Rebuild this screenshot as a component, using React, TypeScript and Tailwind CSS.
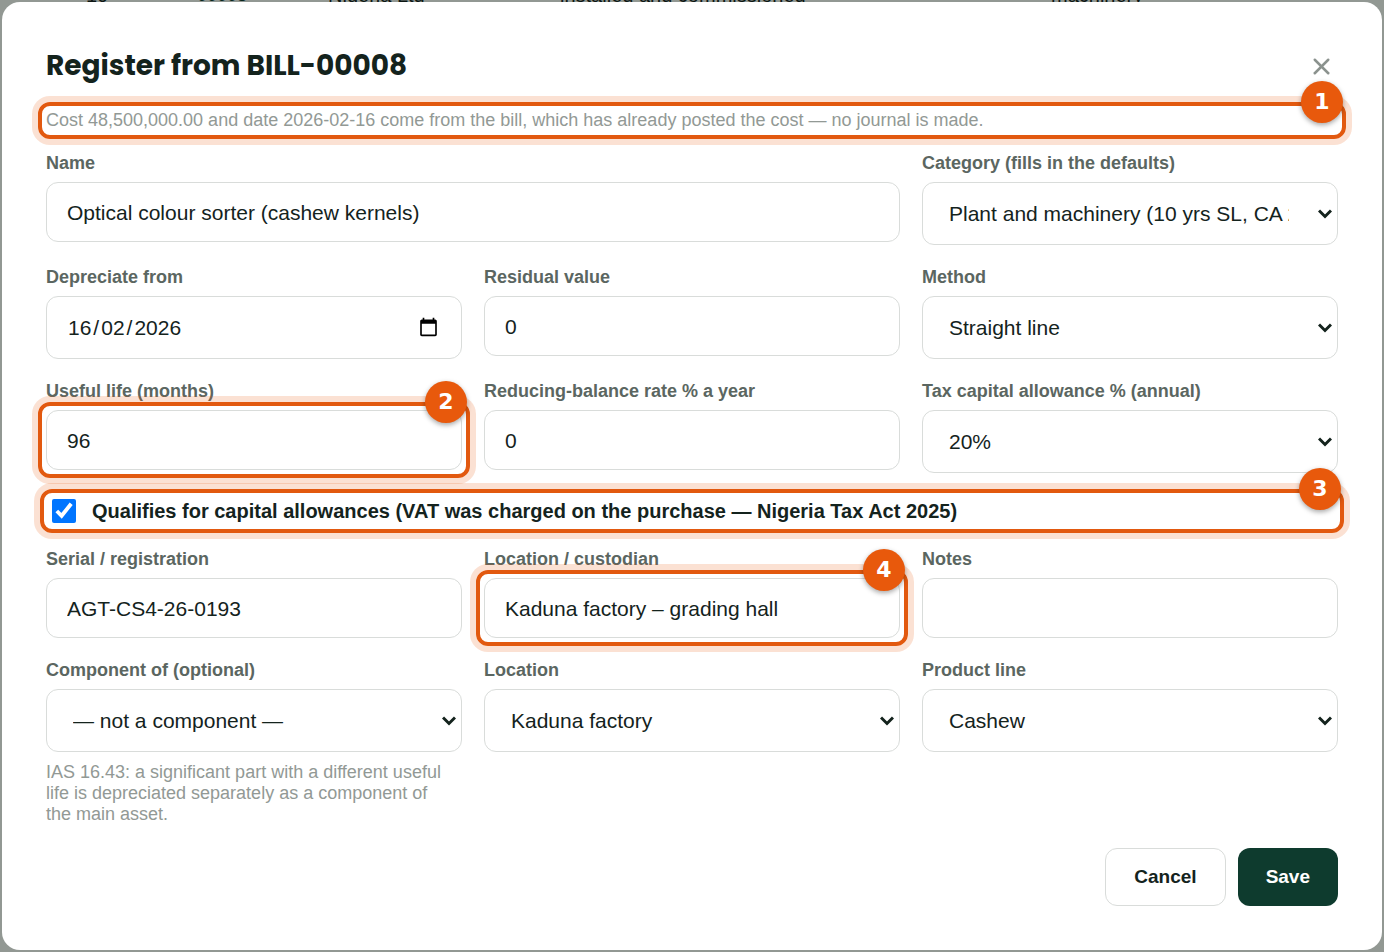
import { Fragment, useId, useState } from 'react';
import type { ReactNode } from 'react';
import { X } from 'lucide-react';

const control =
  'block w-full rounded-xl border border-[#d9dcda] bg-white text-[21px] text-[#14231d] outline-none';

// Numbered orange ring drawn over the parent; the parent must be relative.
function Callout({ n, tight = false }: { n: number; tight?: boolean }) {
  return (
    <span
      className={`pointer-events-none absolute z-10 rounded-xl border-4 border-[#e2590f] shadow-[0_0_0_6px_rgba(232,89,12,0.18)] ${
        tight ? '-inset-1.5' : '-inset-2'
      }`}
    >
      <span className="absolute -top-[25px] -right-px flex size-[42px] items-center justify-center rounded-full bg-[#e8590c] font-['DejaVu_Sans',sans-serif] text-[22px] leading-none font-bold text-white shadow-[0_2px_5px_rgba(0,0,0,0.35)]">
        {n}
      </span>
    </span>
  );
}

function Field({ id, label, hint, className = '', children }: {
  id: string;
  label: string;
  hint?: string;
  className?: string;
  children: ReactNode;
}) {
  return (
    <div className={className}>
      <label htmlFor={id} className="mb-2 block text-[18px] leading-[21px] font-bold text-[#5b6661]">
        {label}
      </label>
      {children}
      {hint && <p className="mt-2.5 pr-3 text-[18px] leading-[21px] text-[#929995]">{hint}</p>}
    </div>
  );
}

function TextField({ label, value, callout, className }: {
  label: string;
  value: string;
  callout?: number;
  className?: string;
}) {
  const id = useId();
  return (
    <Field id={id} label={label} className={className}>
      <div className="relative">
        <input id={id} type="text" defaultValue={value} className={`${control} h-[60px] px-5 pt-0.5`} />
        {callout && <Callout n={callout} />}
      </div>
    </Field>
  );
}

// The browser formats the date by its own locale, so its text is hidden and
// day/month/year is drawn over it. The native picker still works.
function DateField({ label, value }: { label: string; value: string }) {
  const id = useId();
  const [date, setDate] = useState(value);
  const parts = date.split('-').reverse();
  return (
    <Field id={id} label={label}>
      <div className="relative">
        <input
          id={id}
          type="date"
          value={date}
          onChange={(e) => setDate(e.target.value)}
          className={`${control} h-[63px] px-5 [&::-webkit-datetime-edit]:opacity-0`}
        />
        <span
          aria-hidden="true"
          className="pointer-events-none absolute inset-y-0 left-[22px] flex items-center gap-0.5 text-[21px] text-[#14231d]"
        >
          {parts.map((part, i) => (
            <Fragment key={i}>
              {i > 0 && <span>/</span>}
              <span>{part}</span>
            </Fragment>
          ))}
        </span>
      </div>
    </Field>
  );
}

function SelectField({ label, value, hint }: { label: string; value: string; hint?: string }) {
  const id = useId();
  return (
    <Field id={id} label={label} hint={hint}>
      <div className="relative">
        <select id={id} className={`${control} h-[63px] appearance-none pr-12 pl-[26px]`}>
          <option>{value}</option>
        </select>
        <svg
          viewBox="0 0 14 10"
          className="pointer-events-none absolute top-[27px] right-1.5 h-2.5 w-3.5"
          fill="none"
          stroke="#14231d"
          strokeWidth="3"
        >
          <path d="M1 1.5 7 7.5 13 1.5" />
        </svg>
      </div>
    </Field>
  );
}

export default function App() {
  return (
    <div className="relative min-h-screen overflow-hidden bg-[#929893] p-0.5 font-['Liberation_Sans',Arial,sans-serif]">
      {/* table row of the page behind the dialog */}
      <div
        aria-hidden="true"
        className="absolute inset-x-0 -top-4 grid grid-cols-[86px_111px_131px_232px_491px_1fr] text-[20px] leading-[23px] whitespace-nowrap text-[#0c1612]"
      >
        <span className="col-start-2">10</span>
        <span className="text-[18px] font-bold text-[#08261c]">00008</span>
        <span>Nigeria Ltd</span>
        <span>installed and commissioned</span>
        <span>machinery</span>
      </div>

      <div
        role="dialog"
        aria-labelledby="dialog-title"
        className="relative rounded-[18px] bg-white p-11"
      >
        <header className="mb-6 flex h-10 items-center justify-between">
          <h1 id="dialog-title" className="font-[Poppins,Inter,sans-serif] text-[28px] font-bold text-[#14231d]">
            Register from BILL-00008
          </h1>
          <button type="button" aria-label="Close" className="flex w-[34px] justify-center text-[#8b928e]">
            <X size={27} strokeWidth={2.2} />
          </button>
        </header>

        <form onSubmit={(e) => e.preventDefault()}>
          <div className="relative mb-[22px]">
            <p className="text-[18px] leading-[21px] text-[#929995]">
              Cost 48,500,000.00 and date 2026-02-16 come from the bill, which has already posted the
              cost — no journal is made.
            </p>
            <Callout n={1} />
          </div>

          <div className="grid grid-cols-3 gap-[22px]">
            <TextField label="Name" value="Optical colour sorter (cashew kernels)" className="col-span-2" />
            <SelectField label="Category (fills in the defaults)" value="Plant and machinery (10 yrs SL, CA 20%)" />

            <DateField label="Depreciate from" value="2026-02-16" />
            <TextField label="Residual value" value="0" />
            <SelectField label="Method" value="Straight line" />

            <TextField label="Useful life (months)" value="96" callout={2} />
            <TextField label="Reducing-balance rate % a year" value="0" />
            <SelectField label="Tax capital allowance % (annual)" value="20%" />

            <div className="relative col-span-3 flex h-8 items-center">
              <label className="flex items-center gap-4 pl-1.5 text-[20px] font-bold text-[#14231d]">
                <input type="checkbox" defaultChecked className="size-6" />
                Qualifies for capital allowances (VAT was charged on the purchase — Nigeria Tax Act 2025)
              </label>
              <Callout n={3} tight />
            </div>

            <TextField label="Serial / registration" value="AGT-CS4-26-0193" />
            <TextField label="Location / custodian" value="Kaduna factory – grading hall" callout={4} />
            <TextField label="Notes" value="" />

            <SelectField
              label="Component of (optional)"
              value="— not a component —"
              hint="IAS 16.43: a significant part with a different useful life is depreciated separately as a component of the main asset."
            />
            <SelectField label="Location" value="Kaduna factory" />
            <SelectField label="Product line" value="Cashew" />
          </div>

          <div className="mt-[23px] flex justify-end gap-3 text-[19px] font-bold">
            <button type="button" className="h-[58px] rounded-xl border border-[#d9dcda] px-7 text-[#14231d]">
              Cancel
            </button>
            <button type="submit" className="h-[58px] rounded-xl bg-[#0e3b2e] px-7 text-white">
              Save
            </button>
          </div>
        </form>
      </div>
    </div>
  );
}
